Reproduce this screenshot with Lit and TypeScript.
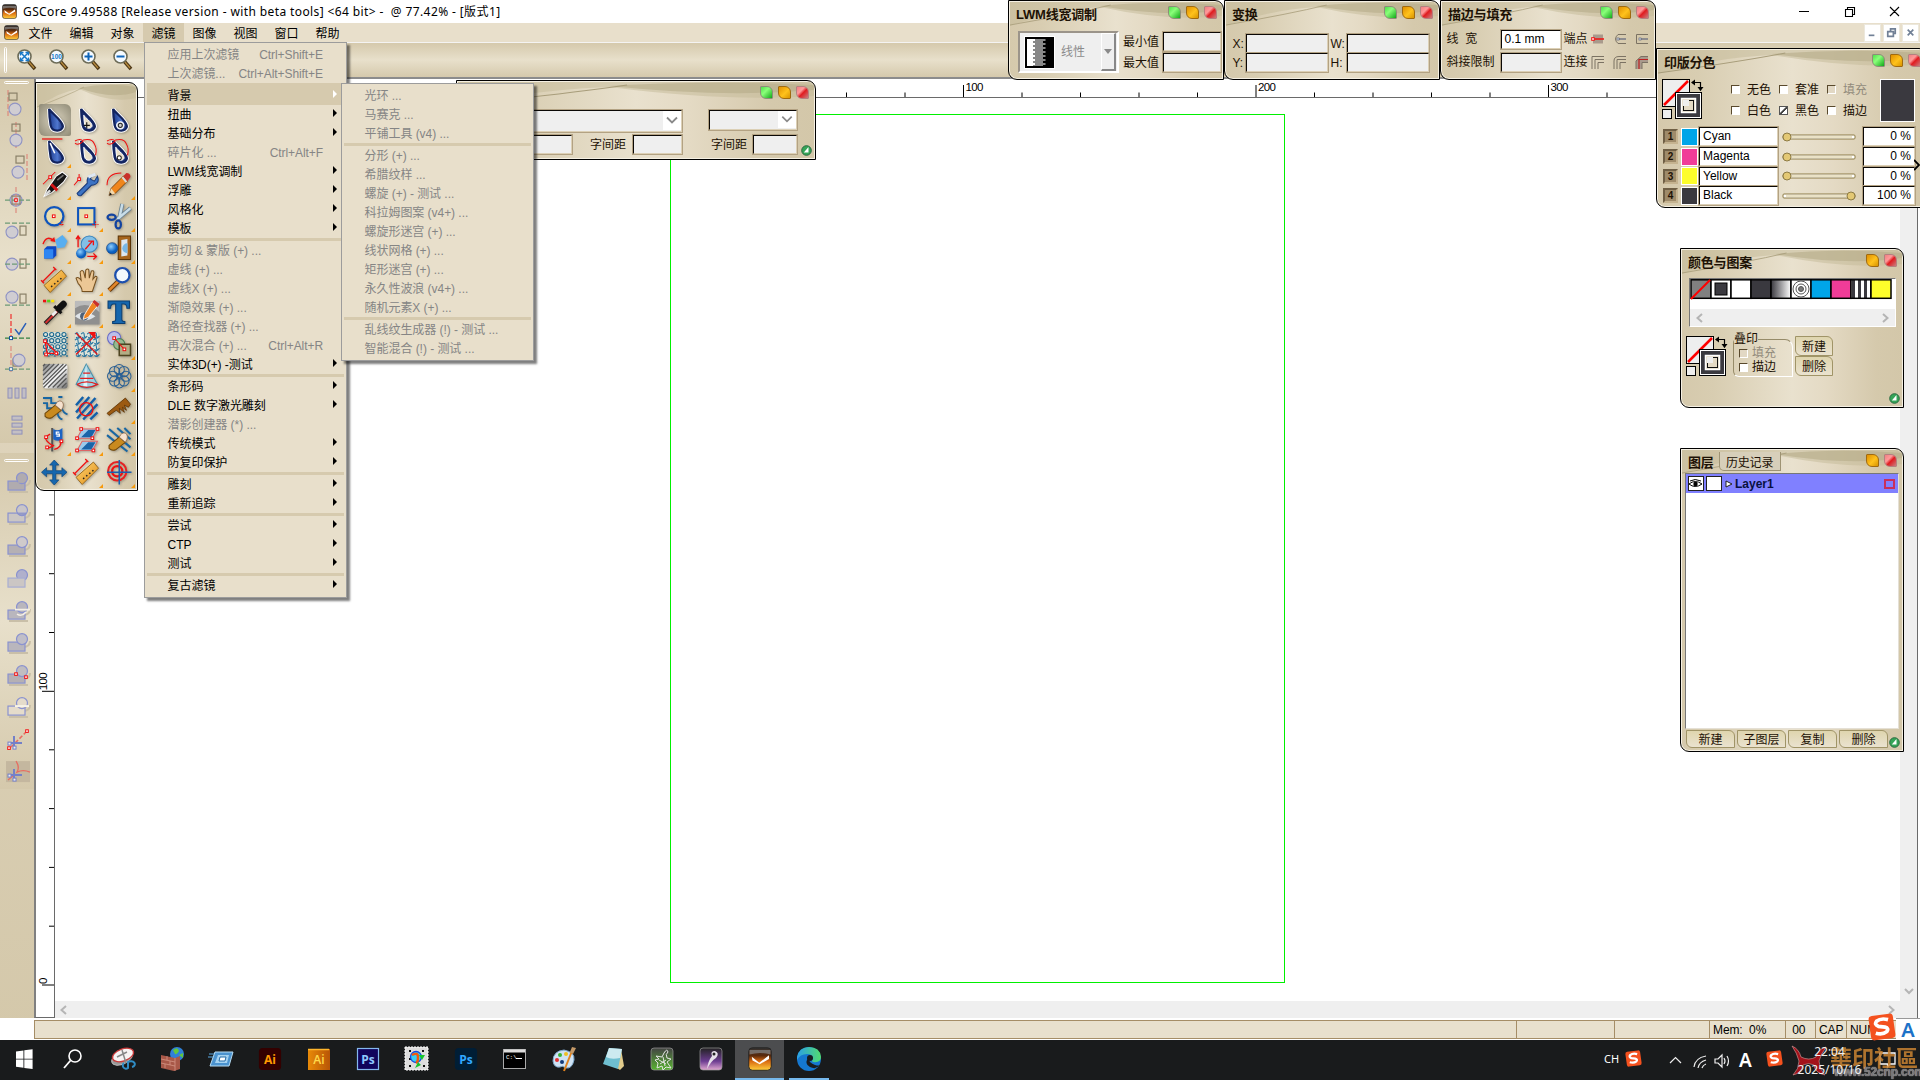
import { LitElement, html, svg, css, nothing } from "lit";
import { customElement, property } from "lit/decorators.js";
import { classMap } from "lit/directives/class-map.js";

const UI = css`"Liberation Sans", "Noto Sans CJK SC", sans-serif`;

const base = css`
  * { box-sizing: border-box; }
  svg { display: block; flex: none; }
`;

/* ---------- toolbox artwork, 24x24 each ---------- */
const DROP = "M6 1 C8 5 19 12 19.500 18 C19.500 23 9 24.500 7.500 17 C6.500 11 6 6 6 1Z";
const nib = (inner: unknown, hollow = false) => svg`
  <path d=${DROP} fill="#fff" stroke="#fff" stroke-width="4"/>
  <path d=${DROP} fill=${hollow ? "#1c3378" : "url(#nib)"} stroke="#13245f" stroke-width="2.200"/>
  ${hollow ? svg`<path d=${DROP} transform="translate(5 6.500) scale(.6)" fill="#e9dfc8" stroke="#fff" stroke-width="1.600"/>` : nothing}
  ${inner}`;
const defs = svg`<defs>
  <linearGradient id="nib" x1="0" x2="1"><stop offset="0" stop-color="#1d3a8c"/><stop offset=".6" stop-color="#4f77cf"/><stop offset="1" stop-color="#1b2f77"/></linearGradient>
  <linearGradient id="gold" x1="0" y1="0" x2="1" y2="1"><stop offset="0" stop-color="#ffd978"/><stop offset="1" stop-color="#e08a12"/></linearGradient>
  <radialGradient id="ball" cx=".4" cy=".35"><stop offset="0" stop-color="#8fd0ff"/><stop offset="1" stop-color="#0a5fc0"/></radialGradient>
  <linearGradient id="steel" x1="0" y1="0" x2="1" y2="1"><stop offset="0" stop-color="#777"/><stop offset=".5" stop-color="#fff"/><stop offset="1" stop-color="#666"/></linearGradient>
</defs>`;
const redNode = (x: number, y: number) => svg`<rect x=${x - 1.3} y=${y - 1.3} width="2.600" height="2.600" fill="#fff" stroke="#f01010" stroke-width="1"/>`;
const ruler = svg`<path d="M1 17 L18 2 L23 8 L7 24Z" fill="url(#gold)" stroke="#8a5a10" stroke-width=".8"/>
  <path d="M8 17.500l1 1M11 15l1 1M14 12.500l1 1M17 10l1 1" stroke="#222" stroke-width="1.500"/>
  <path d="M-1 14 L12 1 M-2 12l3 3 M10 -1l3 3" stroke="#f01010" stroke-width="1.200"/>`;
const finger = svg`<path d="M2 17 L12 9 L18 14 L9 21 Q5 23 2 20Z" fill="#c98a1e" stroke="#6d4508" stroke-width="1"/>
  <path d="M12 9 Q14 4 18 5 Q22 8 18 14Z" fill="#f6e2cf" stroke="#8f6a4a" stroke-width=".8"/>`;
const tools: unknown[] = [
  nib(nothing),
  nib(svg`<path d="M11.500 14v6M8.500 17h6" stroke="#111" stroke-width="1.100"/>`, true),
  nib(svg`<circle cx="13" cy="17" r="3.600" fill="#dfe3ee" stroke="#fff"/><circle cx="13" cy="17" r="2" fill="#ccc" stroke="#222"/>`),
  svg`<path d="M-1 -1h20" stroke="#f01010" stroke-width="1.200"/>${nib(svg`<path d="M7 3 L11.500 13" stroke="#fff" stroke-width="1.500"/>`)}`,
  svg`${nib(nothing, true)}<path d="M0 1q5 -3 8 0q-5 5 -8 2M8 0q9 -2 11 4q3 5 1 11" fill="none" stroke="#f01010"/>`,
  svg`${nib(svg`<circle cx="12" cy="17.500" r="2" fill="#fff" stroke="#222"/>`, true)}<path d="M0 1q5 -3 8 0q-5 5 -8 2M8 0q9 -2 11 4q3 5 1 11" fill="none" stroke="#f01010"/>`,
  svg`<path d="M4 17 L13 4 L19 0 L24 4 L20 10 L9 20 L1 24Z" fill="#151515" stroke="#fff"/><path d="M7 13l6 6l2-2l-6-6z" fill="#d41515"/><path d="M14 8l6-5" stroke="#777" stroke-width="1.500"/><path d="M2 23l5-5" stroke="#ddd" stroke-width="2.400"/><path d="M0 12L12 0" stroke="#f01010"/>${redNode(7, 5)}`,
  svg`<path d="M2 21 L12 11 Q11 4 17 3 L15 7 L19 9 L22 4 Q25 12 16 13 L6 23 Q3 24 2 21Z" fill="#3c73c4" stroke="#173a7c" stroke-width="1"/><path d="M13 5l7-3" stroke="#dfe8f4" stroke-width="3"/><path d="M4 2v5l-5 6" fill="none" stroke="#f01010"/>${redNode(4, 7)}`,
  svg`<path d="M2 23 L4 16 L16 4 L20 9 L8 21Z" fill="#f0861c" stroke="#6d3c0a" stroke-width=".8"/><path d="M16 4l3-3q4 0 4 4l-3 4z" fill="#c9302a"/><path d="M15 5l4 5" stroke="#dadada" stroke-width="2"/><path d="M2 23l2-7l4 5z" fill="#f2d9ae"/><path d="M2 23l1-3l2 2z" fill="#111"/><path d="M0 13Q0 1 14 1" fill="none" stroke="#f01010"/>`,
  svg`<circle cx="11" cy="12" r="9" fill="#e9dcae" stroke="#0e54bd" stroke-width="2.200"/>${redNode(10.500, 12)}<path d="M16 20h5M18.500 17v5" stroke="#f01010" stroke-dasharray="1.500 1"/>`,
  svg`<rect x="3" y="4" width="16" height="16" fill="#e9dcae" stroke="#0e54bd" stroke-width="2"/>${redNode(11, 12)}<path d="M17 20h6M20 17v6" stroke="#f01010" stroke-dasharray="1.500 1"/>`,
  svg`<path d="M15 0 L12 14 M23 4 L10 15" stroke="#6d8494" stroke-width="4"/><path d="M15 0 L12 14 M23 4 L10 15" stroke="#c9dde8" stroke-width="2.400"/><ellipse cx="4.500" cy="13" rx="4" ry="2.500" fill="none" stroke="#1243a0" stroke-width="2.200"/><ellipse cx="11" cy="20" rx="2.600" ry="4" fill="none" stroke="#1243a0" stroke-width="2.200"/>`,
  svg`<path d="M12 4l7-5l5 6l-3 6l-7 1z" fill="#58aef0"/><path d="M1 13l3-3h9v9l-3 3h-9z" fill="#0d47c4"/><path d="M1 13h9v9h-9z" fill="#2f86f2"/><path d="M0 8Q3 -1 10 4" fill="none" stroke="#f01010" stroke-width="1.300"/><path d="M7 5l5 1l-1-5z" fill="#f01010"/>`,
  svg`<circle cx="14" cy="8" r="8" fill="#83bfe6" stroke="#3a86bf"/><circle cx="6" cy="17" r="5" fill="url(#ball)"/><path d="M3 11V1M1 3l2-3l2 3M10 13L17 5M13 5h5v4M12 20h8M18 17l3 3l-3 3" fill="none" stroke="#f01010" stroke-width="1.300"/>`,
  svg`<path d="M11 0h12v23h-12z" fill="#a6651c" stroke="#5a3305"/><path d="M14 4l6 -1v16l-6 1z" fill="#dce7ee"/><path d="M20 7a5 5 0 0 0 0 10z" fill="#79b8e4"/><circle cx="5" cy="12" r="5.500" fill="url(#ball)" stroke="#0b3d80" stroke-width=".6"/>`,
  ruler,
  svg`<path d="M7 23 Q7 19 3 15 L1 10 Q3 8 6 12 L5 4 Q7 1 8.500 4 L10 10 L10.500 2 Q12.500 0 13.500 2 L14 10 L16 3 Q18 2 18.500 4 L17.500 11 L20 8 Q22.500 8 21 11 L17 23Z" fill="#ecc795" stroke="#75501f" stroke-width="1"/>`,
  svg`<path d="M2 22L11 13" stroke="#6b3a08" stroke-width="4.500"/><path d="M2 22L11 13" stroke="#e2862a" stroke-width="2.500"/><circle cx="15" cy="7" r="7" fill="#f3f8fc" stroke="#1c4fae" stroke-width="2.200"/>`,
  svg`<path d="M0 1h3" stroke="#f01010" stroke-width="2.500"/><path d="M4 1h3" stroke="#5bcc1d" stroke-width="2.500"/><path d="M8 1h3" stroke="#ffe600" stroke-width="2.500"/><path d="M2 23L15 10" stroke="#222" stroke-width="4"/><path d="M2.500 22.500L14 11" stroke="#d43030" stroke-width="2"/><path d="M9 15l4-4" stroke="#eee" stroke-width="3"/><path d="M11 6l7 7" stroke="#111" stroke-width="3"/><path d="M16 8l4-4" stroke="#111" stroke-width="6.500" stroke-linecap="round"/>`,
  svg`<rect x="0" y="1" width="24" height="23" fill="#8f8f8f"/><path d="M0 8Q12 0 24 12V1H0z" fill="#bbb"/><path d="M0 16Q8 8 20 16Q10 24 0 16" fill="#dfe4e8"/><circle cx="9" cy="16" r="4" fill="#4d6078"/><path d="M9 15L17 2l5 4L13 17l-5 2z" fill="#ef8421" stroke="#fff" stroke-width=".8"/><path d="M17 2l2-2l5 4l-2 3z" fill="#c9302a"/>`,
  svg`<path d="M1 1h21v7h-2.500q0-4-3-4h-2v15q0 2 3 2v2h-12v-2q3 0 3-2v-15h-2q-3 0-3 4h-2.500z" fill="#1666ad" stroke="#0a3e72" stroke-width="1"/>`,
  svg`<rect width="23" height="23" fill="#dfe3d8"/>${[0, 1, 2, 3].map(i => [0, 1, 2, 3].map(j => svg`<circle cx=${2.5 + i * 6} cy=${2.5 + j * 6} r="2" fill="none" stroke="#1d6a90" stroke-width="1.100"/><path d=${`M${i * 6 + 4.5} ${j * 6 + 5.5}h2`} stroke="#1d6a90" stroke-width="1.200"/>`))}<path d="M2 9L14 21H4Z" fill="none" stroke="#f01010" stroke-width="1.300"/>${redNode(2, 9)}${redNode(3, 22)}${redNode(13, 21)}`,
  svg`<rect width="23" height="23" rx="3" fill="#dfe3d8"/><g fill="none" stroke="#2574a0" stroke-width="1.100">${[0, 1, 2, 3].map(i => [0, 1, 2, 3].map(j => svg`<path d=${`M${i * 6} ${j * 6 + 2}q3 -3 3 1t3 1`}/><path d=${`M${i * 6 + 1} ${j * 6 + 5}q2 2 4 0`}/>`))}</g><path d="M1 22L20 3M1 1L22 22" stroke="#e01616" stroke-width="1.300"/><path d="M13 0h7v7z" fill="#f01010"/>`,
  svg`<circle cx="7" cy="6" r="6.500" fill="#bcbfe8" stroke="#6468c8"/><circle cx="12" cy="12" r="5.500" fill="#98b890" stroke="#4a8054"/><rect x="12" y="12" width="11" height="11" fill="#b3ad85" stroke="#4e4420" stroke-width="1.500"/><path d="M7 6L17 17" stroke="#f01010"/>${redNode(7, 6)}${redNode(17, 17)}`,
  svg`<rect width="24" height="24" rx="3" fill="url(#steel)"/><g stroke="#555" stroke-width="1.200">${[0, 1, 2, 3, 4, 5, 6, 7, 8, 9].map(i => svg`<path d=${`M${Math.max(0, i * 4.5 - 22)} ${Math.min(23, i * 4.5 + 2)}L${Math.min(23, i * 4.5 + 2)} ${Math.max(0, i * 4.5 - 22)}`}/>`)}</g>`,
  svg`<path d="M11 0L1 20Q11 27 22 20Z" fill="#9ccfe0" stroke="#4a93ad"/><path d="M11 0L8 22h4z" fill="#e5f5fa"/><path d="M8 9h7M5 14h13M2 20Q11 15 22 20Q11 26 2 20" fill="none" stroke="#e02020" stroke-width="1.200"/>`,
  svg`<g fill="none" stroke="#285f94" stroke-width="1">${[0, 1, 2, 3, 4, 5, 6, 7].map(i => svg`<circle cx=${12 + 6.5 * Math.cos(i * 0.785)} cy=${12 + 6.5 * Math.sin(i * 0.785)} r="5"/>`)}<circle cx="12" cy="12" r="3"/></g>`,
  svg`<path d="M0 2h8v5h7M0 7h4v5h5M15 1h4M18 11q2 6 6 7M14 16q1 6 5 7" fill="none" stroke="#1766a3" stroke-width="1.800"/>${finger}`,
  svg`<g stroke="#1260aa" stroke-width="2.400"><path d="M1 9L8 1M1 16L14 1M2 22L20 2M8 23L22 8M15 23L22 16"/></g><circle cx="11" cy="13" r="6.500" fill="none" stroke="#f01010" stroke-width="1.400"/>`,
  svg`<path d="M0 17L18 2L23 8L21 11L17 9L19 14L15 11L17 16L12 12L13 17L9 14L2 19Z" fill="#9c5a12" stroke="#5d3204" stroke-width=".8"/>`,
  svg`<path d="M9 0V23" stroke="#555" stroke-width="2"/><path d="M10 1q5 3 9-1v11q-4 3-9 0z" fill="#1c63c4"/><path d="M16 4h-3v2h3v2h-3" fill="none" stroke="#fff" stroke-width="1.200"/><path d="M7 6Q0 9 4 13T10 17T4 20M17 12q2 7-6 9" fill="none" stroke="#f01010" stroke-width="1.300"/>${redNode(3, 9)}${redNode(4, 19)}${redNode(18, 13)}`,
  svg`<path d="M7 1h15l-5 9h-15zM7 13h15l-5 9h-15z" fill="#9cc9ea" stroke="#d66"/><path d="M6 9l7-7l7 0l-4 7zM6 21l7-7l7 0l-4 7z" fill="#1a64a8"/>${redNode(6, 1)}${redNode(22, 1)}${redNode(2, 10)}${redNode(17, 10)}${redNode(2, 22)}${redNode(18, 22)}`,
  svg`<path d="M2 1l21 18M10 0l13 11M0 7l20 16M17 0l6 6" fill="none" stroke="#1766a3" stroke-width="2"/>${finger}`,
  svg`<path d="M11 0l4.500 5h-3v5.500h6v-3l5 4.500l-5 4.500v-3h-6v6h3l-4.500 5l-4.500-5h3v-6h-6v3l-5-4.500l5-4.500v3h6V5h-3z" fill="#1767ae" stroke="#0c467d" stroke-width=".7"/>`,
  ruler,
  svg`<circle cx="10" cy="11" r="9" fill="none" stroke="#e62222" stroke-width="2"/><circle cx="10" cy="11" r="5" fill="none" stroke="#f01010" stroke-width="2.200"/><path d="M12 0v24M0 12h24" stroke="#1c5fb0" stroke-width="1.500"/>`,
];
const flyout = new Set([3, 6, 8, 9, 10, 11, 12, 13, 14, 15, 16, 18, 19, 20, 23, 26, 29, 30, 31, 32, 34, 35]);

/* ---------- side bar artwork, 28x28 each ---------- */
const sq = (x: number, y: number, w = 8, h = 7) => svg`<rect x=${x} y=${y} width=${w} height=${h} fill="none" stroke="#8a8068" stroke-width="1.200"/>`;
const ci = (x: number, y: number) => svg`<circle cx=${x} cy=${y} r="6" fill="#d0cdd2" stroke="#8f93c4" stroke-width="1.100"/>`;
const red = (d: string, c = "#dc8478") => svg`<path d=${d} stroke=${c} stroke-width="1.100" stroke-dasharray="5 2"/>`;
const grn = (y: number) => red(`M2 ${y}h25`, "#6c9a76");
const aligns: unknown[] = [
  svg`${red("M5 1v26")}${sq(6, 4)}${ci(12, 20)}`,
  svg`${red("M13 1v26")}${sq(9, 3)}${ci(13, 19)}`,
  svg`${red("M24 1v26")}${sq(13, 3)}${ci(15, 19)}`,
  svg`${ci(13, 14)}${sq(9, 10, 8, 8)}${red("M13 1v26")}${grn(14)}${redNode(13, 14)}`,
  svg`${grn(5)}${ci(9, 14)}${sq(17, 8, 6, 9)}`,
  svg`${ci(9, 14)}${sq(17, 9, 6, 9)}${grn(14)}`,
  svg`${ci(9, 15)}${sq(17, 12, 6, 9)}${grn(23)}`,
  svg`${red("M8 0v26", "#f02020")}${red("M2 24h25", "#308040")}<path d="M12 15l4 5l7-11" fill="none" stroke="#2a5fb8" stroke-width="1.500"/><rect x="6.500" y="22.500" width="3" height="3" fill="#fff" stroke="#15539c"/>`,
  svg`${red("M8 -1v26")}${red("M2 22h25", "#6c9a76")}${sq(10, 12)}${ci(16, 13)}<rect x="6.500" y="20.500" width="3" height="3" fill="#eee" stroke="#5c83a8"/>`,
  svg`<g fill="#c3bfc4" stroke="#8f90ba"><rect x="5" y="9" width="4" height="10"/><rect x="12" y="9" width="4" height="10"/><rect x="19" y="9" width="4" height="10"/></g>`,
  svg`<g fill="#c3bfc4" stroke="#8f90ba"><rect x="9" y="5" width="10" height="4"/><rect x="9" y="12" width="10" height="4"/><rect x="9" y="19" width="10" height="4"/></g>`,
];
const shape = (f1: string, f2: string, extra: unknown = nothing) => svg`
  <path d="M6 24H25M20 18q7 0 7-6" stroke="#c9bfa8" stroke-width="2" fill="none"/>
  <rect x="5" y="13" width="17" height="9" fill=${f1} stroke="#8a92cf" stroke-width="1.200"/>
  <circle cx="19" cy="10" r="5.500" fill=${f2} stroke="#8a92cf" stroke-width="1.200"/>${extra}`;
const booleans: unknown[] = [
  shape("#b0abaf", "#b0abaf", svg`<path d="M15 14h6.300v-1z" fill="#b0abaf" stroke="#b0abaf"/>`),
  shape("#cbc6c4", "#c9c5c8", svg`<path d="M14 13h9a6 6 0 0 1-9 0" fill="#a2a4bf" stroke="#8a92cf"/>`),
  shape("#b5b0b4", "#cfcacb"),
  svg`<circle cx="19" cy="10" r="5.500" fill="#b0b0cc" stroke="#8a92cf" stroke-width="1.200"/><rect x="5" y="13" width="17" height="9" fill="#cbc6c4" stroke="#a8add2" stroke-width="1.200"/>`,
  shape("#b9b6bd", "#b9b6bd", svg`<path d="M12 12.500h15M14 17q5 3 9-2" fill="none" stroke="#f4efe6" stroke-width="1.600"/>`),
  shape("#b9b6bd", "#c0bec8"),
  shape("#b5b0b4", "#c0bdc0", svg`${redNode(13, 13)}${redNode(23, 16)}`),
  shape("#e5dccb", "#e5dccb", svg`<path d="M12 13h14" stroke="#f8f4e8" stroke-width="2"/>`),
  svg`<path d="M8 21L23 6" stroke="#e76c60" stroke-width="1.500" stroke-dasharray="4 2"/>${redNode(24, 5)}${redNode(6, 22)}<path d="M11 10v11M6 17h13" stroke="#7480c8" stroke-width="2"/><rect x="5" y="16" width="3" height="3" fill="#eee" stroke="#7480c8"/><rect x="10" y="20" width="3" height="3" fill="#eee" stroke="#7480c8"/>`,
  svg`<rect x="3" y="3" width="24" height="21" fill="#c4b79f"/><path d="M13 3q4 6 1 11q6-3 13 0M5 22l6-5" stroke="#e76c60" stroke-width="1.300" fill="none"/><path d="M11 11v11M6 17h13" stroke="#7480c8" stroke-width="2"/><rect x="5" y="16" width="3" height="3" fill="#eee" stroke="#7480c8"/><rect x="10" y="20" width="3" height="3" fill="#eee" stroke="#7480c8"/>`,
];

const appIcon = (s: number) => html`<svg width=${s} height=${s} viewBox="0 0 16 16">
  <defs><linearGradient id="app" x1="0" y1="0" x2="0" y2="1"><stop offset="0" stop-color="#333"/><stop offset=".35" stop-color="#5a2a0c"/><stop offset=".6" stop-color="#d96a10"/><stop offset="1" stop-color="#ffcf3d"/></linearGradient></defs>
  <rect x=".5" y=".5" width="15" height="15" rx="2.500" fill="url(#app)" stroke="#222" stroke-width=".6"/>
  <path d="M1 2h14v3q-7-2-14 0z" fill="#888" opacity=".7"/>
  <path d="M2.500 6.500L7.500 10.500L14 5.500L14 8L7.800 11.500L3 9Z" fill="#fff"/></svg>`;

const sogou = (s: number) => html`<svg width=${s} height=${s} viewBox="0 0 24 24"><g transform="rotate(-8 12 12)"><rect x="1.500" y="1.500" width="21" height="21" rx="3" fill="#f4511e"/>
  <path d="M18 6.500Q12 4 8 6.500Q5.500 9 9 11L14.500 12.500Q18 14 15.500 16.500Q11.500 19 6 16.500" fill="none" stroke="#fff" stroke-width="3.200"/></g></svg>`;

/* ---------- floating palette ---------- */
@customElement("gs-palette")
export class GsPalette extends LitElement {
  @property() heading = "";
  @property() lights = "gor";
  @property({ type: Boolean }) grip = false;
  static styles = [base, css`
    :host { display: block; position: absolute; font: 12px/14px ${UI}; color: #1d1205; }
    .shell { height: 100%; border: 1.500px solid #000; border-radius: 0 9px 0 9px; overflow: hidden; position: relative;
      background: linear-gradient(90deg, #d5c9ac 0%, #d8cdb1 15%, #e9e1ce 50%, #e4dac4 65%, #d5c9ac 88%, #d3c7a9 100%); box-shadow: inset 0 0 0 1px #f5f0e3; }
    .wave { position: absolute; left: 1px; top: 1px; width: calc(100% - 2px); height: 24px; }
    .head { position: relative; height: 26px; padding: 5px 6px 0 7px; display: flex; justify-content: space-between; font-size: 13px; font-weight: bold; letter-spacing: -.2px; white-space: nowrap; }
    .text { padding-top: 2px; }
    .lights { display: flex; gap: 5px; margin-left: auto; }
    .l { width: 13px; height: 13px; border-radius: 1px 6px 1px 6px; border: 1px solid #8d8d78; }
    .g { background: linear-gradient(135deg, #4fe04a, #8aff7a 40%, #12a818); }
    .o { background: linear-gradient(135deg, #e09000, #ffc21c 55%, #d89400); border-color: #a06a10; }
    .r { background: linear-gradient(135deg, #f08080, #ff9a9a 35%, #e01c20 55%, #c98080); border-color: #b58080; }
    .body { position: relative; }
    .grip { position: absolute; right: 3px; bottom: 3px; }
  `];
  render() {
    return html`<div class="shell">
      <svg class="wave" viewBox="0 0 200 24" preserveAspectRatio="none">
        <path d="M0 0H200V14Q150 20 85 5Q40 8 0 24Z" fill="#c3b998" opacity=".5"/>
        <path d="M85 4Q140 -2 200 3V8Q150 16 85 4Z" fill="#b6ab88" opacity=".6"/>
        <path d="M0 23Q60 12 95 3" stroke="#a89d7b" fill="none" stroke-width=".8"/>
      </svg>
      <div class="head"><div class="text"><slot name="head">${this.heading}</slot></div><div class="lights">${[...this.lights].map(c => html`<i class="l ${c}"></i>`)}</div></div>
      <div class="body"><slot></slot></div>
      ${this.grip ? html`<svg class="grip" width="11" height="11" viewBox="0 0 11 11"><circle cx="5.500" cy="5.500" r="4.800" fill="#35a558" stroke="#2c6a42"/><path d="M7.500 2v5.500H2.800z" fill="#fff"/></svg>` : nothing}
    </div>`;
  }
}

/* ---------- drop-down menu ---------- */
type Row = { t: string; k?: string; sub?: boolean; off?: boolean; hot?: boolean } | "-";
const s = (t: string): Row => ({ t, sub: true });
const d = (t: string, k = ""): Row => ({ t, k, off: true });
const filterMenu: Row[] = [
  d("应用上次滤镜", "Ctrl+Shift+E"), d("上次滤镜...", "Ctrl+Alt+Shift+E"), "-",
  { t: "背景", sub: true, hot: true }, s("扭曲"), s("基础分布"), d("碎片化 ...", "Ctrl+Alt+F"), s("LWM线宽调制"), s("浮雕"), s("风格化"), s("模板"), "-",
  d("剪切 & 蒙版 (+) ..."), d("虚线 (+) ..."), d("虚线X (+) ..."), d("渐隐效果 (+) ..."), d("路径查找器 (+) ..."), d("再次混合 (+) ...", "Ctrl+Alt+R"), s("实体3D(+) -测试"), "-",
  s("条形码"), s("DLE 数字激光雕刻"), d("潜影创建器 (*) ..."), s("传统模式"), s("防复印保护"), "-",
  s("雕刻"), s("重新追踪"), "-", s("尝试"), s("CTP"), s("测试"), "-", s("复古滤镜"),
];
const backMenu: Row[] = [
  d("光环 ..."), d("马赛克 ..."), d("平铺工具 (v4) ..."), "-",
  d("分形 (+) ..."), d("希腊纹样 ..."), d("螺旋 (+) - 测试 ..."), d("科拉姆图案 (v4+) ..."), d("螺旋形迷宫 (+) ..."), d("线状网格 (+) ..."), d("矩形迷宫 (+) ..."), d("永久性波浪 (v4+) ..."), d("随机元素X (+) ..."), "-",
  d("乱线纹生成器 (!) - 测试 ..."), d("智能混合 (!) - 测试 ..."),
];
@customElement("gs-menu")
export class GsMenu extends LitElement {
  @property({ attribute: false }) rows: Row[] = [];
  static styles = [base, css`
    :host { display: block; position: absolute; padding: 2px; background: #e8dfcb; border: 1px solid #9c9c9c; box-shadow: 3px 3px 2px #00000080; font: 12px/18px ${UI}; }
    .row { height: 19px; padding: 1px 7px 0 20.500px; display: flex; align-items: center; color: #000; white-space: nowrap; letter-spacing: -.04px; }
    .row span:first-child { flex: 1; }
    .off { color: #858585; }
    .hot { background: #d6caae; }
    .key { margin-right: 14px; letter-spacing: -.07px; }
    .sep { height: 3px; background: #d6caae; }
    .arrow { border: 4px solid transparent; border-left-color: #000; border-right: 0; margin-bottom: 4px; }
    .hot .arrow { border-left-color: #fff; }
  `];
  render() {
    return this.rows.map(r => r === "-" ? html`<div class="sep"></div>` : html`
      <div class=${classMap({ row: true, off: !!r.off, hot: !!r.hot })}><span>${r.t}</span>
      ${r.k ? html`<span class="key">${r.k}</span>` : nothing}${r.sub ? html`<i class="arrow"></i>` : nothing}</div>`);
  }
}

const fillStroke = html`<svg width="42" height="42" viewBox="0 0 42 42">
  <rect x=".5" y=".5" width="27" height="27" fill="#eee" stroke="#000"/><path d="M2 26L26 2" stroke="#f00" stroke-width="2.500"/>
  <rect x=".5" y="30.500" width="9" height="9" fill="#eee" stroke="#000"/>
  <path d="M30 3.500h8.500v8" fill="none" stroke="#000" stroke-width="1.200"/><path d="M29 3.500l4-3v6zM38.500 12l-3-4h6z"/>
  <rect x="13.500" y="13.500" width="26" height="26" fill="#fff" stroke="#000"/><rect x="15" y="15" width="23" height="23" fill="#3a393f"/>
  <rect x="19.500" y="19.500" width="14" height="14" fill="#e4dac4" stroke="#fff" stroke-width="1.500"/><rect x="21.500" y="21.500" width="10" height="10" fill="none" stroke="#111"/><path d="M21 21h6v6h-6z" fill="#eee"/></svg>`;

const plates = [["Cyan", "#00a5e8", 0], ["Magenta", "#f03c98", 0], ["Yellow", "#fdfd2b", 0], ["Black", "#3a393f", 100]] as const;

const hTicks = [378, 671, 963.5, 1256, 1548.5];
const task = (letter: string, bg: string, fg: string, line = bg) => html`<svg width="24" height="24" viewBox="0 0 24 24"><rect x="1.500" y="1.500" width="21" height="21" rx=${line === bg ? 3 : 0} fill=${bg} stroke=${line} stroke-width="1.200"/><text x="12" y="16.500" text-anchor="middle" font-family="Open Sans, sans-serif" font-weight="bold" font-size="12" fill=${fg}>${letter}</text></svg>`;
const pic = (c: unknown) => html`<svg width="26" height="26" viewBox="0 0 26 26">${c}</svg>`;
const taskIcons = [
  pic(svg`<path d="M3 3.500l9-1.200v10H3zM13 2.200l10-1.400v11.500H13zM3 13.300h9v10l-9-1.200zM13 13.300h10v11.500l-10-1.400z" fill="#fff" transform="translate(1.500 2.500) scale(.83)"/>`),
  pic(svg`<circle cx="14" cy="10" r="6" fill="none" stroke="#fff" stroke-width="1.600"/><path d="M9.500 14.500L3 22" stroke="#fff" stroke-width="1.800"/>`),
  pic(svg`<ellipse cx="12" cy="12" rx="11" ry="6" transform="rotate(-25 12 12)" fill="#999" stroke="#bbb"/><ellipse cx="13" cy="9" rx="11" ry="6" transform="rotate(-20 13 9)" fill="#f6f3f3" stroke="#c93a3a" stroke-width="1.300"/><path d="M7 11l10-5M12 4l4 13" stroke="#888" stroke-width="1.500"/><path d="M14 17a3 3 0 1 0 4 5l0-6a4 3 0 1 1 4 5" fill="none" stroke="#2f8cc4" stroke-width="2"/>`),
  pic(svg`<circle cx="18" cy="8" r="7" fill="#2f80d8"/><path d="M14 4q5-4 6 1q-2 4-4 3zM20 9l4-2v5z" fill="#63c63c"/><path d="M2 9l14 3l5-2v13l-6 2l-13-3z" fill="#a85848"/><path d="M2 13l14 3M2 17l14 3M16 12v13M8 10v4M11 15v4M6 18v4" stroke="#d49585" stroke-width=".8"/>`),
  pic(svg`<path d="M7 6h18l-4 14H2z" fill="#4b93cf" stroke="#b6dcf3"/><path d="M10 9h11l-2 8H7z" fill="#a5d2f0"/><path d="M12 11h6l-1 4h-6z" fill="#fff" stroke="#246ca8"/><path d="M1 8h5M0 11h5" stroke="#5aa8df"/>`),
  task("Ai", "#330000", "#ff9a00"),
  html`<svg width="24" height="24" viewBox="0 0 24 24"><defs><linearGradient id="ai"><stop stop-color="#e88a08"/><stop offset="1" stop-color="#b85506"/></linearGradient></defs><rect x="1" y="2" width="22" height="21" fill="url(#ai)"/><path d="M1 2.500h21" stroke="#ffb62c" stroke-width="1.500"/><text x="12" y="17" text-anchor="middle" font-family="Open Sans, sans-serif" font-size="12" font-weight="600" fill="#ffd94a">Ai</text></svg>`,
  task("Ps", "#10045c", "#8ec8ff", "#84b7ee"),
  pic(svg`<rect x="1" y="1" width="23" height="23" fill="#ddd" stroke="#fff" stroke-dasharray="2 1"/><g fill="#111"><rect x="5" y="4" width="2" height="2"/><rect x="18" y="4" width="2" height="2"/><rect x="5" y="12" width="2" height="2"/><rect x="5" y="19" width="2" height="2"/><rect x="19" y="19" width="2" height="2"/></g><circle cx="12" cy="11" r="5.500" fill="#37d0f4" stroke="#1446e0" stroke-width="1.300"/><path d="M8 9q6-3 6 2t-2 6" fill="none" stroke="#f05a10" stroke-width="2.500"/><path d="M11 22l3-6l3 3zM15 9l6 0l-3 5z" fill="#17c42c"/>`),
  task("Ps", "#001e36", "#31a8ff"),
  pic(svg`<rect x="1.500" y="3.500" width="22" height="19" fill="#000" stroke="#aaa"/><path d="M2 5h21" stroke="#ddd" stroke-width="3"/><text x="4" y="13" font-family="Liberation Mono" font-size="6" fill="#fff">C:\\</text><path d="M14 12.500h6" stroke="#fff"/>`),
  pic(svg`<path d="M2 15q0-10 11-11q11 2 10 10q-2 9-8 8q-4-3-6-1q-6 1-7-6z" fill="#cfe3f4" stroke="#7fa9cc"/><circle cx="6" cy="14" r="2" fill="#e03030"/><circle cx="9" cy="9" r="2" fill="#37b337"/><circle cx="15" cy="8" r="2" fill="#f0c020"/><circle cx="11" cy="16" r="2" fill="#123a7a"/><path d="M13 25L21 5" stroke="#e08320" stroke-width="2"/><path d="M19 6l2-5l4 1l-3 6z" fill="#c59a68"/>`),
  pic(svg`<path d="M21 3l3 17l-4 4l-3-2z" fill="#e2cc8c"/><path d="M9 2l13 1l-4 20l-15-5z" fill="#6fbfd0"/><path d="M9 2l13 1l-2 9q-9 2-14-1z" fill="#cdeaf0"/>`),
  html`<svg width="24" height="24" viewBox="0 0 24 24"><defs><linearGradient id="ga" x2="0" y2="1"><stop stop-color="#444"/><stop offset="1" stop-color="#58b331"/></linearGradient></defs><rect x="1" y="1" width="22" height="22" rx="3" fill="url(#ga)" stroke="#999" stroke-width=".7"/><path d="M6 9l6 1l2-4q3-5 4-1q-3 2-1 6l4 1l-4 3l4 6l-5-1l-3 3l-1-4l-5 2l1-5l-3-3l4-1zM9 13l7 4M13 10l2 9M10 17l6-4" stroke="#e4e4e4" fill="none"/></svg>`,
  html`<svg width="24" height="24" viewBox="0 0 24 24"><defs><linearGradient id="gp" x2="0" y2="1"><stop stop-color="#222"/><stop offset=".6" stop-color="#6d3d92"/><stop offset="1" stop-color="#e0a8d0"/></linearGradient></defs><rect x="1" y="1" width="22" height="22" rx="3" fill="url(#gp)" stroke="#999" stroke-width=".7"/><path d="M8 22q1-8 5-13q-2-5 3-5q5 2 1 7q-5 3-9 11z" fill="#e6e0ea"/><circle cx="15" cy="7" r="1.500" fill="#222"/></svg>`,
  appIcon(24),
  pic(svg`<defs><linearGradient id="e1"><stop stop-color="#2a9fe8"/><stop offset="1" stop-color="#52dc6e"/></linearGradient></defs><circle cx="13" cy="13" r="12" fill="#1578d0"/><path d="M1 11Q3 1 13 1q11 0 12 10q0 6-8 5q-2-1 0-3q0-5-6-5q-7 0-10 6z" fill="url(#e1)"/><path d="M12 12q-4 6 2 9t10-2q-1 1-5 0q-6-2-7-7z" fill="#1a1c1f"/><circle cx="14" cy="12" r="3" fill="#1a1c1f"/>`),
];

@customElement("app-root")
export class AppRoot extends LitElement {
  static styles = [base, css`
    :host { display: flex; flex-direction: column; position: relative; width: 1920px; height: 1080px; overflow: hidden; background: #fff; font: 12px/14px ${UI}; color: #000; }
    .title { height: 23px; display: flex; align-items: center; padding: 0 20px 0 2px; gap: 6px; font: 12px/16px "Noto Sans", "Noto Sans CJK SC", sans-serif; white-space: pre; letter-spacing: .39px; }
    .title .win { margin-left: auto; }
    .menubar { height: 20px; display: flex; align-items: center; background: #e8dfcb; border-bottom: 1.500px solid #f4f3f2; padding-left: 4px; }
    .menubar a { padding: 2px 8.500px 0; height: 19px; line-height: 18px; }
    .menubar a.on { background: #d6caae; }
    .menubar .first { padding-left: 9.500px; }
    .mdi { margin-left: auto; display: flex; gap: 2px; padding-right: 1px; align-self: flex-end; }
    .mdi svg { background: #fff; border: 1px solid #ece8dd; }
    .tools { height: 36px; background: linear-gradient(#d5c9ac, #e8e0cb 50%, #d5c9ac); border-bottom: 2px solid #8c8c8c; display: flex; align-items: center; padding-left: 4px; }
    .hand { width: 3px; height: 26px; border: 1px solid #fff; border-radius: 2px; margin-right: 10px; }
    .tools svg { margin-right: 12px; }
    .work { flex: 1; display: flex; min-height: 0; }
    .side { width: 34px; background: linear-gradient(#e4dac5, #d4c8aa); margin-bottom: -22px; }
    .strip { background: linear-gradient(#d5c9ac, #e8e0cb 50%, #d5c9ac); display: flex; flex-direction: column; }
    .strip.a { height: 364px; } .strip.b { height: 336px; margin-top: 10px; }
    .strip .bar { width: 25px; height: 3px; border: 1px solid #fff; border-radius: 2px; margin: 2px 0 3px 4px; flex: none; }
    .strip.b .bar { margin: 6px 0 5px 4px; }
    .strip svg { margin-left: 3px; height: 32.200px; }
    .doc { flex: 1; display: grid; grid-template-columns: 19px 1fr 17px; grid-template-rows: 19px 1fr 17px; border-left: 2px solid #808080; border-bottom: 1.500px solid #6a6a6a; margin-right: 2px; border-right: 1px solid #6a6a6a; min-width: 0; }
    .doc > .hr { grid-column: 1 / 4; overflow: hidden; }
    .canvas { position: relative; background: #fff; }
    .page { position: absolute; left: 615px; top: 16px; width: 615px; height: 869px; border: 1px solid #00f000; }
    .bar-h, .bar-v { background: #efefef; display: flex; justify-content: space-between; align-items: center; }
    .bar-h { padding: 0 3px; } .bar-v { flex-direction: column; padding: 4px 0; }
    .corner { background: #efefef; }
    .status { height: 22px; background: #fff; padding: 2px 0 1px 34px; display: flex; font-size: 12px; line-height: 19px; }
    .status div { background: #e8e0cd; border: 1px solid #a58d66; border-right: 0; padding-left: 3px; white-space: pre; letter-spacing: -.1px; }
    .taskbar { height: 40px; background: #191b1c; display: flex; align-items: center; position: relative; }
    .taskbar .t { width: 49px; height: 40px; display: grid; place-items: center; padding-bottom: 2px; }
    .taskbar .on { background: #4c4d4f; border-bottom: 2px solid #76b9ed; padding-bottom: 0; }
    .taskbar .run { border-bottom: 2px solid #76b9ed; margin: 0 4px 0 5px; width: 40px; padding-bottom: 0; }
    .tray { margin-left: auto; height: 40px; width: 316px; display: flex; align-items: center; color: #fff; font-family: "Noto Sans", sans-serif; position: relative; padding-bottom: 3px; }
    .cn { font-size: 11px; }
    .clock { position: absolute; left: 193px; top: 3px; width: 65px; text-align: center; line-height: 17.500px; font-size: 12px; color: #f0f0f0; }
    .mark { position: absolute; left: 226px; top: 4px; font: 600 22px/24px "Noto Sans CJK TC", sans-serif; color: #c98332; opacity: .85; white-space: nowrap; }
    .url { position: absolute; left: 230px; top: 25px; font: bold 12px/14px "Liberation Sans", sans-serif; color: #777; text-shadow: 0 0 1px #ddd; letter-spacing: -.2px; }
    .deer { position: absolute; left: 187px; top: 5px; }
    .note { position: absolute; left: 275px; top: 12px; }
    .ime { position: absolute; right: 0; top: 1014px; height: 27px; display: flex; align-items: flex-end; }
    .ime b { width: 24px; height: 22px; background: #fff; border-top: 1px solid #999; color: #1c72c8; font: 600 20px/22px "Noto Sans", sans-serif; text-align: center; margin-bottom: 1px; }

    .toolbox { left: 35px; top: 82px; width: 103px; height: 409px; }
    .m1 { left: 144px; top: 42px; width: 203px; } .m2 { left: 341px; top: 83px; width: 193px; }
    .grid { display: grid; grid-template-columns: repeat(3, 32px); grid-auto-rows: 32px; margin: -5px 0 0 2.500px; }
    .cell { display: grid; place-items: center; position: relative; }
    .cell.sel { background: radial-gradient(#dcd5c0, #8e8975); border-radius: 2px 6px 2px 6px; }
    .cell svg { overflow: visible; filter: drop-shadow(1px 1px 1px #0004); }
    .cell.fly::after { content: ""; position: absolute; right: 0; bottom: 0; border: 2.500px solid #f79a0c; border-top-color: transparent; border-left-color: transparent; }

    .p-text { left: 456px; top: 80px; width: 360px; height: 80px; }
    .p-lwm { left: 1008px; top: 0; width: 216px; height: 80px; }
    .p-xy { left: 1224px; top: 0; width: 216px; height: 80px; }
    .p-stroke { left: 1440px; top: 0; width: 216px; height: 80px; }
    .p-plates { left: 1656px; top: 48px; width: 272px; height: 160px; }
    .p-colors { left: 1680px; top: 248px; width: 224px; height: 160px; }
    .p-layers { left: 1680px; top: 448px; width: 224px; height: 304px; }
    .cursor { position: absolute; left: 1914px; top: 158px; }

    .in { display: block; background: #efefef; height: 19px; border: 1.500px solid #0b0805; border-right-color: #dcd0b6; border-bottom-color: #dcd0b6; outline: 1px solid #b3a283; padding: 0 3px; line-height: 17px; white-space: nowrap; }
    .in.w { background: #fff; color: #000; }
    .lwm { display: grid; grid-template-columns: 101px 36px 58px; column-gap: 4px; row-gap: 2px; padding: 5px 0 0 9px; align-items: center; grid-auto-rows: 19px; }
    .combo { grid-row: span 2; height: 42px; background: #efefef; border: 2px solid #fff; border-top-color: #9b948a; border-left-color: #9b948a; display: flex; align-items: center; padding: 0 1px 0 4px; color: #8b8b8b; gap: 6px; }
    .combo i { margin-left: auto; width: 15px; height: 38px; border: 1px solid #fff; border-right: 2px solid #888; border-bottom: 2px solid #888; display: grid; place-items: center; }
    .combo i::after { content: ""; border: 4px solid transparent; border-top: 5px solid #8a8a8a; border-bottom: 0; }
    .xy { display: grid; grid-template-columns: 10px 82px 13px 82px; column-gap: 3px; padding: 7px 0 0 7.500px; align-items: center; grid-auto-rows: 19px; }
    .st { display: grid; grid-template-columns: 51px 60px 24px 19px 19px 19px; column-gap: 3px; row-gap: 3px; padding: 2px 0 0 5.500px; align-items: center; grid-auto-rows: 20px; white-space: nowrap; }

    .sep-top { display: flex; padding: 4px 0 0 5px; }
    .checks { display: grid; grid-template-columns: repeat(3, 48px); grid-auto-rows: 21px; margin-left: 27px; align-items: center; }
    .ck { display: flex; align-items: center; gap: 7px; font-size: 12px; white-space: nowrap; }
    .ck.dim { color: #928b7c; }
    .ck i { width: 9px; height: 9px; background: #fff; border: 1.500px solid #fff; border-top-color: #59492c; border-left-color: #59492c; }
    .ck.dim i { background: #e2d8c4; }
    .ck.tick i { border-color: #555; background: linear-gradient(135deg, #fff 40%, #444 45% 60%, #fff 62%); }
    .dark { width: 35px; height: 43px; background: #3a393f; border: 1px solid #fff; margin-left: 5px; }
    .rows { margin-top: 5px; }
    .pl { display: flex; align-items: center; height: 19.700px; padding-left: 6px; }
    .num { width: 15px; height: 15px; background: #9f8b6a; border: 2px solid #6f5f45; border-right-color: #c5b390; border-bottom-color: #c5b390; font-weight: bold; font-size: 10px; line-height: 11px; text-align: center; }
    .sw { width: 17px; height: 18px; border: 1px solid #fff; margin: 0 1px 0 3px; }
    .pl .name { width: 79px; }
    .pl .pct { width: 52px; text-align: right; }
    .sl { margin: 0 7px 0 4px; }

    .lib { margin: 3px 0 0 8px; width: 207px; height: 49px; background: #fff; border: 1.500px solid #fff; border-top-color: #777; border-left-color: #777; display: flex; flex-direction: column; justify-content: space-between; }
    .lib .bar-h { height: 17px; padding: 0 4px; }
    .low { display: flex; padding: 9px 0 0 5px; }
    fieldset { margin: -3px 0 0 5px; border: 1.500px solid #fff; border-left-color: #968b69; border-top-color: #968b69; border-radius: 4px 8px 0 6px; padding: 0 0 0 5px; width: 60px; height: 44px; min-width: 0; }
    legend { padding: 0; margin-left: -5px; line-height: 13px; }
    fieldset .ck { height: 14px; gap: 4px; }
    .btns { display: flex; flex-direction: column; margin: 0 0 0 2px; }
    .btn { width: 38px; height: 20px; border: 1px solid #a09467; border-right-width: 1.500px; border-bottom-width: 1.500px; border-radius: 0 6px 0 6px; background: linear-gradient(#dfd5ae, #eae2cf); text-align: center; line-height: 20px; }
    .tabs { display: flex; gap: 5px; }
    .tab { border: 1px solid #9e9373; border-top: 0; background: #d7cfba; border-radius: 0 0 0 5px; font-weight: normal; font-size: 12px; width: 62px; height: 19px; margin-top: -4px; line-height: 22px; text-align: center; }
    .list { margin: -2px 0 0 4px; width: 214px; height: 256px; background: #fff; border: 1.500px solid #e5e0d5; border-top-color: #777; border-left-color: #777; }
    .layer { height: 19px; background: #8080ff; display: flex; align-items: center; gap: 2.500px; padding: 0 3px 0 1.500px; font-weight: bold; color: #081040; }
    .layer i { width: 16px; height: 15px; background: #fff; border: 1px solid #222; display: grid; place-items: center; }
    .layer em { margin-left: auto; width: 11px; height: 10px; border: 2px solid #c8305c; }
    .foot { display: flex; gap: 2px; padding: 1px 0 0 5px; }
    .foot .btn { width: 49px; height: 18px; line-height: 18px; }

    .txt { display: grid; grid-template-columns: 214px 88px; column-gap: 27px; padding: 3px 0 0 11px; }
    .dd { display: flex; justify-content: flex-end; padding: 0; height: 20px; }
    .dd.tall { height: 22px; }
    .dd svg { background: #fff; }
    .txt2 { display: flex; align-items: center; padding: 3px 0 0 54px; white-space: nowrap; }
    .txt2 .x { width: 61px; margin-right: 18px; } .txt2 .y { width: 49px; margin: 0 29px 0 7px; } .txt2 .z { width: 44px; margin-left: 6px; }
  `];

  private chev(dir: string, c = "#b5b5b5") {
    const p: Record<string, string> = { l: "M8 2L3.500 6L8 10", r: "M4 2L8.500 6L4 10", d: "M2 4L6 8L10 4" };
    return html`<svg width="12" height="12" viewBox="0 0 12 12"><path d=${p[dir]} fill="none" stroke=${c} stroke-width="2"/></svg>`;
  }
  private lens(inner: unknown) {
    return html`<svg width="20" height="22" viewBox="0 0 20 22"><path d="M11 12L18 20" stroke="#4d3716" stroke-width="3.500"/><path d="M12 13L17 19" stroke="#b58a3f" stroke-width="1.300"/><circle cx="7.500" cy="7.500" r="6.500" fill="#f4faff" stroke="#6d6c58" stroke-width="1.600"/>${inner}</svg>`;
  }
  private ck(t: string, c = "") { return html`<span class="ck ${c}"><i></i>${t}</span>`; }
  private dd(h: number) { return html`<svg width="18" height=${h} viewBox="0 0 18 18"><path d="M4 6l5 5l5-5" fill="none" stroke="#8a8a8a" stroke-width="1.800"/></svg>`; }

  private frame() {
    const v = [985, 691.3, 397.5];
    return html`
    <div class="title">${appIcon(15)}<span>GSCore 9.49588 [Release version - with beta tools] &lt;64 bit&gt; -  @ 77.42% - [版式1]</span>
      <svg class="win" width="104" height="14" viewBox="0 0 104 14"><g fill="none" stroke="#000" stroke-width="1.100"><path d="M3 6.500h10M49.500 4.500h7v7h-7zM51.500 4.500v-2h7v7h-2M94 2l9 9M103 2l-9 9"/></g></svg></div>
    <div class="menubar">${appIcon(15)}<a class="first">文件</a><a>编辑</a><a>对象</a><a class="on">滤镜</a><a>图像</a><a>视图</a><a>窗口</a><a>帮助</a>
      <div class="mdi">${["M4 11h6", "M4 7h6v5h-6zM7 7v-3h5v5h-2", "M5 5l6 6M11 5l-6 6"].map(p => html`<svg width="17" height="18" viewBox="0 0 16 17"><path d=${p} fill="none" stroke="#718096" stroke-width="1.800"/></svg>`)}</div></div>
    <div class="tools"><div class="hand"></div>
      ${this.lens(svg`<path d="M4 4l7 7M11 4l-7 7" stroke="#1878c8" stroke-width="1.500"/><path d="M3.500 6.500v-3h3M8.500 3.500h3v3M3.500 8.500v3h3M8.500 11.500h3v-3" fill="none" stroke="#1878c8" stroke-width="1.300"/>`)}
      ${this.lens(svg`<text x="7.500" y="10" font-size="6.500" font-weight="bold" text-anchor="middle" fill="#1878c8">100</text>`)}
      ${this.lens(svg`<path d="M3.500 7.500h8M7.500 3.500v8" stroke="#0e64b8" stroke-width="2"/>`)}
      ${this.lens(svg`<path d="M3.500 7.500h8" stroke="#0e64b8" stroke-width="2"/>`)}
    </div>
    <div class="work">
      <div class="side">
        <div class="strip a"><div class="bar"></div>${aligns.map(a => html`<svg width="30" height="32" viewBox="0 -2 30 32">${a}</svg>`)}</div>
        <div class="strip b"><div class="bar"></div>${booleans.map(a => html`<svg width="30" height="32" viewBox="0 0 30 30">${a}</svg>`)}</div>
      </div>
      <div class="doc">
        <svg class="hr" width="1880" height="19" viewBox="36 79 1880 19"><path d="M54 97.500H1920" stroke="#6a6a6a"/>
          ${hTicks.map((x, i) => svg`<path d=${`M${x} 85V97` + [1, 2, 3, 4].map(k => `M${x + k * 58.5} 92.500V97`).join("")} stroke="#000"/><text x=${x + 2} y="90.500" font-size="11.500" font-family="Liberation Sans" textLength=${i === 1 ? 6 : 18}>${Math.abs(i - 1) * 100}</text>`)}
          <path d="M86.500 92.500V97" stroke="#000"/></svg>
        <svg width="19" height="903" viewBox="36 98 19 903" preserveAspectRatio="xMinYMin slice"><path d="M54.500 97V1018" stroke="#6a6a6a"/>
          ${v.map((y, i) => svg`<path d=${`M42 ${y}H54` + [1, 2, 3, 4].map(k => `M49 ${y - k * 58.8}H54`).join("")} stroke="#000"/><text transform=${`translate(47 ${y - 1}) rotate(-90)`} font-size="11.500" font-family="Liberation Sans" textLength=${i ? 18 : 6}>${i * 100}</text>`)}</svg>
        <div class="canvas"><div class="page"></div></div>
        <div class="bar-v"><span></span>${this.chev("d")}</div>
        <svg width="19" height="17" viewBox="0 0 19 17"><path d="M18.500 0V17" stroke="#6a6a6a"/></svg><div class="bar-h">${this.chev("l")}${this.chev("r")}</div><div class="corner"></div>
      </div>
    </div>
    <div class="status">${[1482, 98, 95].map(w => html`<div style="width:${w}px"></div>`)}<div style="width:76px">Mem:  0%</div><div style="width:30px"> 00</div><div style="width:31px">CAP</div><div style="flex:1">NUM</div></div>
    <div class="taskbar">${taskIcons.map((ic, i) => html`<div class=${classMap({ t: true, on: i === 15, run: i === 16 })}>${ic}</div>`)}
      <div class="tray"><span class="cn">CH</span><span style="margin-left:6px">${sogou(17)}</span>
        <svg width="112" height="24" viewBox="1668 1046 112 24" style="margin-left:25px"><g fill="none" stroke="#eee" stroke-width="1.200"><path d="M1671 1062l5.500-5.500l5.500 5.500"/><path d="M1695 1066q1-9 12-11M1699 1067q1-6 8-8M1703 1067q1-3 4-4"/><path d="M1716 1058h3l4-4v12l-4-4h-3zM1725 1057q2 3 0 6M1728 1055q3 5 0 10" /></g><text x="1740" y="1066" font-size="19" font-weight="600" fill="#fff" font-family="Noto Sans">A</text></svg>
        <span style="margin-left:-13px">${sogou(17)}</span>
        <svg class="deer" width="36" height="32" viewBox="0 0 36 32"><path d="M1 1Q8 4 10 12Q18 16 25 12Q27 4 35 2Q30 9 28 16Q28 24 34 30Q24 28 23 20Q18 17 12 20Q11 28 2 30Q8 24 8 16Q6 8 1 1Z" fill="#a3121a" stroke="#d9a0a0" stroke-width=".6"/></svg>
        <svg class="note" width="17" height="17" viewBox="0 0 17 17"><path d="M1 1h15v11h-5l-2.500 3v-3H1z" fill="none" stroke="#fff" stroke-width="1.300"/></svg>
        <div class="mark">華印社區</div><div class="url">www.52cnp.com</div>
        <div class="clock">22:04<br>2025/10/16</div>
      </div>
    </div>
    <div class="ime">${sogou(28)}<b>A</b></div>`;
  }

  private capIcon(i: number, hot: boolean) {
    const c = hot ? "#c02020" : "#7b7263";
    const p = [
      svg`<path d="M2 2.500h10v9H2z" fill="#a99a8c"/><path d="M2 7h11" stroke="#f01010" stroke-width="1.300"/>${redNode(2, 7)}`,
      svg`<path d="M13 2.500H5q-5 4.500 0 9h8" fill="none" stroke=${c}/><path d="M5 7h8" stroke="#444f70"/><rect x="4" y="6" width="2" height="2" fill="#fff" stroke="#444f70" stroke-width=".6"/>`,
      svg`<path d="M13 2.500H1.500v9H13" fill="none" stroke=${c}/><path d="M4 7h9" stroke="#444f70"/><rect x="4" y="6" width="2" height="2" fill="#fff" stroke="#444f70" stroke-width=".6"/>`,
      svg`<path d="M1 14V1.500H13M7 14V7.500H13M4 14V4.500h9" fill="none" stroke=${c}/>`,
      svg`<path d="M1 14V6q0-4.500 5-4.500H13M7 14V7.500H13M4 14V4.500h9" fill="none" stroke=${c}/>`,
      svg`<path d="M1 14V6l5-5h7v6.500H7V14z" fill="#a99a8c"/><path d="M1 14V6l5-4.500H13M7 14V7.500H13" fill="none" stroke="#7b7263"/><path d="M4 14V4.500h9" fill="none" stroke=${c} stroke-width="1.200"/>`,
    ];
    return html`<svg width="14" height="14" viewBox="0 0 14 14">${p[i]}</svg>`;
  }

  private swatches() {
    const f = ["#808080", "#fff", "#fff", "#3a393f", "url(#gr)", "#fff", "#00a5e8", "#f03c98", "url(#st)", "#fdfd2b"];
    return html`<svg width="203" height="21" viewBox="0 0 203 21"><defs><linearGradient id="gr"><stop stop-color="#3a393f"/><stop offset="1" stop-color="#fff"/></linearGradient>
      <pattern id="st" width="6" height="20" patternUnits="userSpaceOnUse"><rect width="3" height="20" fill="#3a393f"/><rect x="3" width="3" height="20" fill="#fff"/></pattern></defs>
      ${f.map((c, i) => svg`<rect x=${i * 20 + 1} y=".8" width="20" height="18.500" fill=${c} stroke="#000" stroke-width="1.500"/>`)}
      <path d="M1 20L20 1" stroke="#f00" stroke-width="2"/><rect x="25" y="4" width="12" height="12" fill="#3a393f" stroke="#000"/>
      <g fill="none" stroke="#555"><circle cx="111" cy="10" r="8"/><circle cx="111" cy="10" r="5"/><circle cx="111" cy="10" r="2.500" fill="#777"/></g></svg>`;
  }

  render() {
    return html`${this.frame()}
    <gs-palette class="toolbox" lights="">
      <div class="grid">${tools.map((t, i) => html`<div class=${classMap({ cell: true, sel: i === 0, fly: flyout.has(i) })}><svg width="25" height="25" viewBox="-1 0 24.500 24.500">${defs}${t}</svg></div>`)}</div>
    </gs-palette>
    <gs-palette class="p-text" grip>
      <div class="txt"><span class="in dd tall">${this.dd(19)}</span><span class="in dd">${this.dd(17)}</span></div>
      <div class="txt2"><span class="in x"></span><span>字间距</span><span class="in y"></span><span>字间距</span><span class="in z"></span></div>
    </gs-palette>
    <gs-palette heading="LWM线宽调制" class="p-lwm">
      <div class="lwm"><div class="combo"><svg width="31" height="33" viewBox="0 0 31 33"><path d="M0 0h31v33H0z" fill="#fff"/><path d="M1 1h29v31H1z"/><path d="M3 3h6v27H3z" fill="#fff"/><path d="M9 3h10v27H9z" fill="#888"/><path d="M9.500 3v27" stroke="#fff" stroke-width="3" stroke-dasharray="2 2"/><path d="M20 3v27" stroke="#888" stroke-width="3" stroke-dasharray="2 2"/></svg>线性<i></i></div>
        <span>最小值</span><span class="in"></span><span>最大值</span><span class="in"></span></div>
    </gs-palette>
    <gs-palette heading="变换" class="p-xy">
      <div class="xy"><span>X:</span><span class="in"></span><span>W:</span><span class="in"></span><span>Y:</span><span class="in"></span><span>H:</span><span class="in"></span></div>
    </gs-palette>
    <gs-palette heading="描边与填充" class="p-stroke">
      <div class="st"><span>线 &nbsp;宽</span><span class="in w">0.1 mm</span><span>端点</span>${[0, 1, 2].map(i => this.capIcon(i, false))}
        <span>斜接限制</span><span class="in"></span><span>连接</span>${[3, 4, 5].map(i => this.capIcon(i, i === 5))}</div>
    </gs-palette>
    <gs-palette heading="印版分色" class="p-plates">
      <div class="sep-top">${fillStroke}<div class="checks">${this.ck("无色")}${this.ck("套准")}${this.ck("填充", "dim")}${this.ck("白色")}${this.ck("黑色", "tick")}${this.ck("描边")}</div><div class="dark"></div></div>
      <div class="rows">${plates.map(([n, c, v], i) => html`<div class="pl"><span class="num">${i + 1}</span><span class="sw" style="background:${c}"></span><span class="in w name">${n}</span>
        <svg class="sl" width="74" height="10" viewBox="0 0 74 10"><rect x="1" y="3" width="72" height="4" rx="1" fill="#fff" stroke="#8d7b45"/><path d="M4 5h66" stroke="#d5c48c"/><circle cx=${v ? 69 : 5} cy="5" r="4" fill="#e3c874" stroke="#8d7b45"/></svg>
        <span class="in w pct">${v} %</span></div>`)}</div>
    </gs-palette>
    <svg class="cursor" width="6" height="14" viewBox="0 0 6 14"><path d="M0 2L5 7L0 12" fill="none" stroke="#000" stroke-width="1.800"/></svg>
    <gs-palette heading="颜色与图案" lights="or" grip class="p-colors">
      <div class="lib">${this.swatches()}<div class="bar-h">${this.chev("l")}${this.chev("r")}</div></div>
      <div class="low">${fillStroke}<fieldset><legend>叠印</legend>${this.ck("填充", "dim")}${this.ck("描边")}</fieldset><div class="btns"><span class="btn">新建</span><span class="btn">删除</span></div></div>
    </gs-palette>
    <gs-palette lights="or" grip class="p-layers">
      <div slot="head" class="tabs"><span>图层</span><span class="tab">历史记录</span></div>
      <div class="list"><div class="layer"><i><svg width="13" height="10" viewBox="0 0 13 10"><path d="M0 5Q6 0 13 5Q6 10 0 5M1 2Q6 -1 12 2" fill="none" stroke="#000"/><circle cx="6.500" cy="5" r="2.200"/></svg></i><i></i><svg width="8" height="8" viewBox="0 0 8 8"><path d="M1 1L7 4L1 7Z" fill="#fff" stroke="#222"/></svg>Layer1<em></em></div></div>
      <div class="foot"><span class="btn">新建</span><span class="btn">子图层</span><span class="btn">复制</span><span class="btn">删除</span></div>
    </gs-palette>
    <gs-menu class="m1" .rows=${filterMenu}></gs-menu>
    <gs-menu class="m2" .rows=${backMenu}></gs-menu>`;
  }
}
